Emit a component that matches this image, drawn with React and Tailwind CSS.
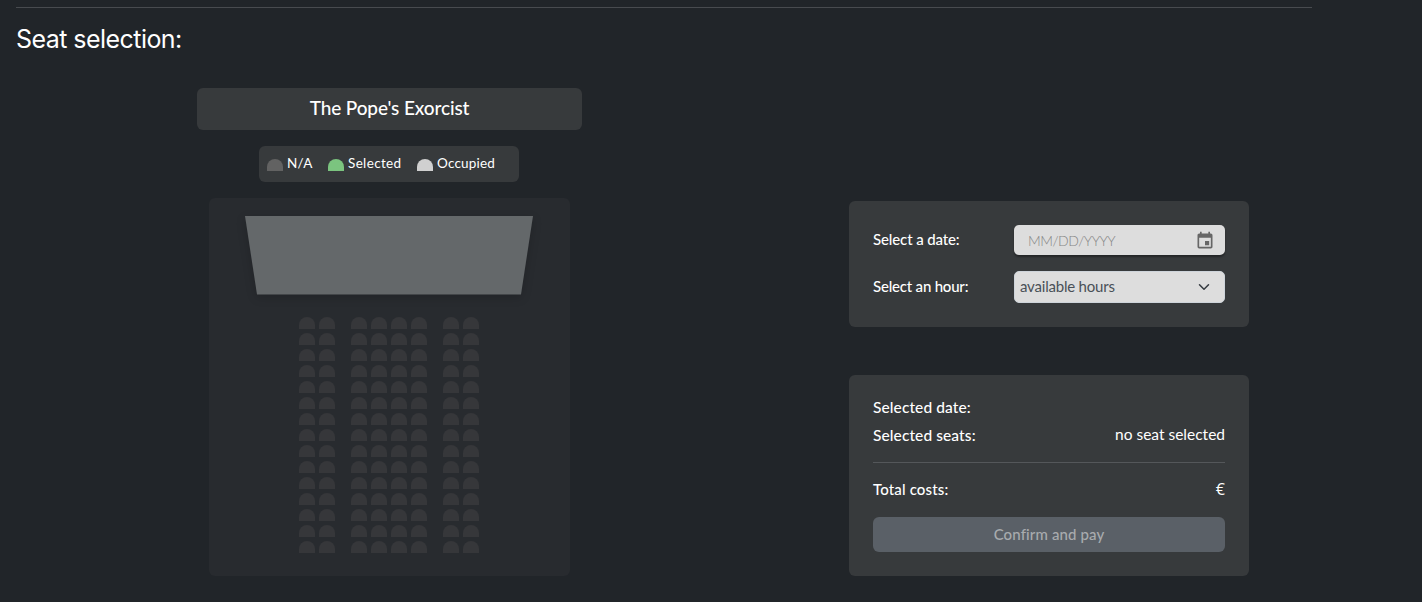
import { MdEvent } from "react-icons/md";

const ROWS = Array.from({ length: 15 }, (_, i) => i);
const BLOCKS = [2, 4, 2];

function Seat({ color }) {
  return <span className={`block h-3 w-4 shrink-0 rounded-t-[8px] ${color}`} />;
}

function LegendItem({ color, label, labelClass }) {
  return (
    <div className="flex items-center gap-1">
      <span className="pt-[3px]">
        <Seat color={color} />
      </span>
      <span className={`whitespace-nowrap text-[13.5px] leading-5 text-white ${labelClass}`}>{label}</span>
    </div>
  );
}

function SeatMap() {
  return (
    <section className="flex h-[378px] w-[361px] flex-col items-center rounded-md bg-[#282b2f] pr-px pt-[18px]">
      <svg
        className="block h-[79px] w-[288px] shrink-0 overflow-visible drop-shadow-[0_3px_5px_rgba(0,0,0,0.16)]"
        viewBox="0 0 288 79"
      >
        <path d="M0 0H288L276 78.5H12Z" fill="#64686a" />
      </svg>
      <div className="mt-[22px] flex flex-col gap-1">
        {ROWS.map((row) => (
          <div key={row} className="flex gap-4">
            {BLOCKS.map((count, block) => (
              <div key={block} className="flex gap-1">
                {ROWS.slice(0, count).map((seat) => (
                  <Seat key={seat} color="bg-[#36373a]" />
                ))}
              </div>
            ))}
          </div>
        ))}
      </div>
    </section>
  );
}

export default function App() {
  return (
    <main className="h-[602px] w-full overflow-hidden bg-[#212529] pl-4 pt-[7px] font-['Lato',sans-serif] text-white">
      <hr className="w-[1296px] border-0 border-t border-[#484b4f]" />
      <h1 className="mt-[13px] h-9 whitespace-nowrap font-['Inter',sans-serif] text-[25px] leading-9 tracking-[-0.55px]">
        Seat selection:
      </h1>
      <div className="mt-[31px] flex">
        <div className="ml-[181px] flex w-[385px] flex-col items-center">
          <h2 className="h-[42px] w-full rounded-md bg-[#373a3c] text-center text-[19px] font-medium leading-[39px] tracking-[-0.12px]">
            The Pope's Exorcist
          </h2>
          <div className="mr-px mt-4 flex h-9 w-[260px] items-center gap-[15px] rounded-md bg-[#373a3c] pb-[2px] pl-2">
            <LegendItem color="bg-[#626262]" label="N/A" labelClass="w-[26px] tracking-[0.3px]" />
            <LegendItem color="bg-[#7bc47f]" label="Selected" labelClass="w-[54px] tracking-[0.35px]" />
            <LegendItem color="bg-[#d0d0d0]" label="Occupied" labelClass="w-[58px] tracking-[0.2px]" />
          </div>
          <div className="mt-4">
            <SeatMap />
          </div>
        </div>
        <div className="ml-[267px] flex w-[400px] flex-col pt-[113px] text-[15px] font-medium">
          <section className="flex h-[126px] flex-col rounded-md bg-[#373a3c] px-6 pt-6">
            <div className="flex h-[30px] items-center justify-between">
              <label className="pb-[2px] tracking-[-0.12px]">Select a date:</label>
              <div className="flex h-[30px] w-[211px] items-center justify-between rounded-[5px] bg-[#dddddd] pl-[14px] pr-[10px] text-[14px] font-light tracking-[-0.5px] text-[#858585] shadow-[0_2px_2px_rgba(0,0,0,0.35)]">
                <span>MM/DD/YYYY</span>
                <span className="pt-[2px]">
                  <MdEvent className="block size-5 text-[#666666]" />
                </span>
              </div>
            </div>
            <div className="mt-4 flex h-8 items-center justify-between">
              <label className="pb-[2px] tracking-[-0.2px]">Select an hour:</label>
              <div className="flex h-8 w-[211px] items-center justify-between rounded-[5px] border border-[#ced4da] bg-[#dddddd] pl-[5px] pr-[14px] font-normal tracking-[-0.2px] text-[#495057]">
                <span className="pb-[2px]">available hours</span>
                <svg className="size-3" viewBox="0 0 16 16" fill="none" stroke="#343a40" strokeWidth="2" strokeLinecap="round" strokeLinejoin="round">
                  <path d="m2 5 6 6 6-6" />
                </svg>
              </div>
            </div>
          </section>
          <section className="mt-12 flex h-[201px] flex-col rounded-md bg-[#373a3c] px-6 pt-[21px]">
            <div className="h-[22px] text-[15.5px] leading-[22px] tracking-[0.1px]">Selected date:</div>
            <div className="mt-[6px] flex h-[22px] justify-between text-[15.5px] leading-[22px]">
              <span className="tracking-[0.1px]">Selected seats:</span>
              <span className="-mt-px font-normal">no seat selected</span>
            </div>
            <hr className="mt-4 border-0 border-t border-[#54575a]" />
            <div className="mt-[15px] flex h-[22px] justify-between leading-[22px]">
              <span className="tracking-[0.15px]">Total costs:</span>
              <span className="font-['Open_Sans',sans-serif] text-[16px] font-normal">€</span>
            </div>
            <button className="mt-[17px] h-[35px] w-full rounded-md bg-[#5a6067] font-medium tracking-[0.12px] text-[#a8abae]">
              Confirm and pay
            </button>
          </section>
        </div>
      </div>
    </main>
  );
}
